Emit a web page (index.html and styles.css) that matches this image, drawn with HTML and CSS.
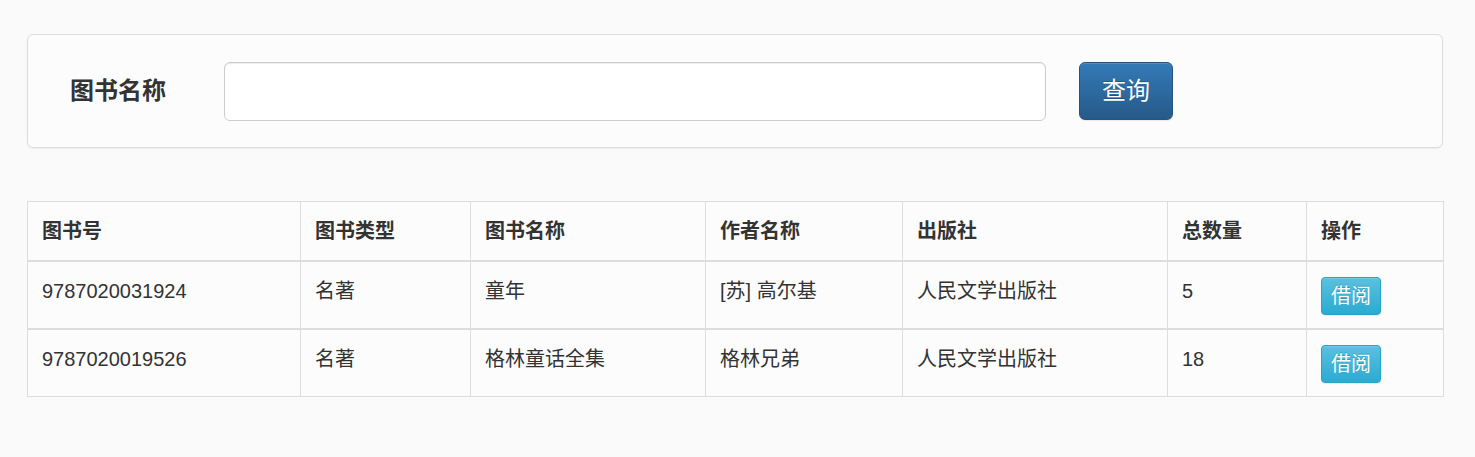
FILE: index.html
```html
<!DOCTYPE html>
<html lang="zh-CN">
<head>
<meta charset="utf-8">
<title>图书查询</title>
<link rel="stylesheet" href="styles.css">
</head>
<body>
<div class="page">
  <form class="search-panel">
    <label class="search-label" for="bookName">图书名称</label>
    <input class="search-input" id="bookName" type="text">
    <button class="btn btn-primary" type="button">查询</button>
  </form>

  <table class="book-table">
    <colgroup>
      <col class="c-isbn"><col class="c-type"><col class="c-name"><col class="c-author"><col class="c-pub"><col class="c-count"><col class="c-op">
    </colgroup>
    <thead>
      <tr><th>图书号</th><th>图书类型</th><th>图书名称</th><th>作者名称</th><th>出版社</th><th>总数量</th><th>操作</th></tr>
    </thead>
    <tbody>
      <tr><td>9787020031924</td><td>名著</td><td>童年</td><td>[苏] 高尔基</td><td>人民文学出版社</td><td>5</td><td><button class="btn btn-info" type="button">借阅</button></td></tr>
    </tbody>
    <tbody>
      <tr><td>9787020019526</td><td>名著</td><td>格林童话全集</td><td>格林兄弟</td><td>人民文学出版社</td><td>18</td><td><button class="btn btn-info" type="button">借阅</button></td></tr>
    </tbody>
  </table>
</div>
</body>
</html>
```

FILE: styles.css
```css
html, body {
  margin: 0;
  padding: 0;
}
body {
  background: #fafafa;
  color: #333;
  font-family: "Liberation Sans", "Noto Sans CJK SC", sans-serif;
  font-size: 20px;
  line-height: 1.42857;
}
.page {
  padding: 34px 32px 40px 27px;
}
.search-panel {
  display: flex;
  align-items: center;
  height: 114px;
  box-sizing: border-box;
  background: #fcfcfc;
  border: 1px solid #ddd;
  border-radius: 6px;
  box-shadow: 0 1px 2px rgba(0, 0, 0, 0.05);
  padding: 0 0 0 42px;
  margin: 0 0 53px 0;
}
.search-label {
  font-size: 24px;
  font-weight: 700;
  width: 97px;
  margin-right: 57px;
}
.search-input {
  width: 822px;
  height: 59px;
  box-sizing: border-box;
  border: 1px solid #ccc;
  border-radius: 6px;
  background: #fff;
  box-shadow: inset 0 1px 1px rgba(0, 0, 0, 0.075);
  font: inherit;
  padding: 0 16px;
  margin-right: 33px;
}
.btn {
  font-family: inherit;
  color: #fff;
  cursor: pointer;
  box-shadow: inset 0 1px 0 rgba(255, 255, 255, 0.15), 0 1px 1px rgba(0, 0, 0, 0.075);
  text-shadow: 0 -1px 0 rgba(0, 0, 0, 0.2);
}
.btn-primary {
  font-size: 24px;
  line-height: 32px;
  padding: 12px 22px;
  border: 1px solid #245580;
  border-radius: 6px;
  background: linear-gradient(to bottom, #337ab7 0%, #265a88 100%);
}
.btn-info {
  font-size: 20px;
  line-height: 30px;
  padding: 3px 9px;
  border: 1px solid #28a4c9;
  border-radius: 4px;
  background: linear-gradient(to bottom, #5bc0de 0%, #2aabd2 100%);
}
.book-table {
  width: 100%;
  table-layout: fixed;
  border-collapse: collapse;
  border-spacing: 0;
  background: #fcfcfc;
  border: 1px solid #ddd;
}
.c-isbn { width: 273px; }
.c-type { width: 170px; }
.c-name { width: 235px; }
.c-author { width: 197px; }
.c-pub { width: 265px; }
.c-count { width: 139px; }
.c-op { width: 137px; }
.book-table th,
.book-table td {
  border: 1px solid #ddd;
  text-align: left;
  vertical-align: top;
  padding: 15px 14px 13px 14px;
}
.book-table th {
  font-weight: 700;
  padding-top: 15px;
  padding-bottom: 14px;
  border-bottom-width: 2px;
}
.book-table tbody + tbody {
  border-top: 2px solid #ddd;
}
```
